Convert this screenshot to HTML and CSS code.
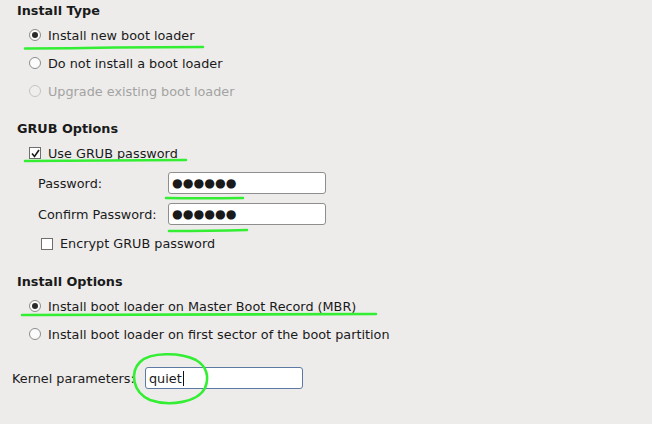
FILE: index.html
```html
<!DOCTYPE html>
<html>
<head>
<meta charset="utf-8">
<title>Boot loader configuration</title>
<link rel="stylesheet" href="styles.css">
</head>
<body>
<div id="Page">

<div class="head">Install Type</div>
<div class="opt"><span class="radio on"></span>Install new boot loader</div>
<div class="opt"><span class="radio"></span>Do not install a boot loader</div>
<div class="opt off"><span class="radio"></span>Upgrade existing boot loader</div>

<div class="head h2">GRUB Options</div>
<div class="opt"><span class="check on"><svg width="9" height="9" viewBox="0 0 9 9"><path d="M1 4.5 L3.5 7.5 L8 1" fill="none" stroke="#1a1a1a" stroke-width="1.6"/></svg></span>Use GRUB password</div>
<div class="field pw1"><span class="lbl">Password:</span><span class="entry dots">&#9679;&#9679;&#9679;&#9679;&#9679;&#9679;</span></div>
<div class="field pw2"><span class="lbl">Confirm Password:</span><span class="entry dots">&#9679;&#9679;&#9679;&#9679;&#9679;&#9679;</span></div>
<div class="opt sub"><span class="check"></span>Encrypt GRUB password</div>

<div class="head h3">Install Options</div>
<div class="opt"><span class="radio on"></span>Install boot loader on Master Boot Record (MBR)</div>
<div class="opt"><span class="radio"></span>Install boot loader on first sector of the boot partition</div>

<div class="field kern"><span class="klbl">Kernel parameters:</span><span class="entry focus"><span class="caret">quiet</span></span></div>

<!-- marker scribbles over the shot -->
<svg id="Marks" width="652" height="424" viewBox="0 0 652 424">
<g fill="none" stroke="#33ee33" stroke-width="2.6" stroke-linecap="round">
<path d="M25 48.5 Q70 48.5 115 47.5 Q160 47 203 47"/>
<path d="M25 161 Q100 160.5 186 160"/>
<path d="M166 198 Q200 198.5 243 198"/>
<path d="M169 231 Q210 231 247 230"/>
<path d="M22 315 Q200 314 376 314"/>
<path d="M196 360 C180 352 150 352 140 362 C130 372 132 392 150 400 C170 407 198 402 205 388 C210 376 206 366 196 360"/>
</g>
</svg>

</div>
</body>
</html>
```
FILE: styles.css
```css
* {margin:0;padding:0;box-sizing:border-box;}
body {background-color:#edeceb;color:#1a1a1a;font-family:"DejaVu Sans",sans-serif;font-size:12.8px;}
#Page {position:relative;width:652px;height:424px;overflow:hidden;padding-top:1px;}
#Marks {position:absolute;top:0;left:0;}

.head {height:20px;line-height:20px;padding-left:17px;font-weight:bold;font-size:12.8px;}
.head.h2 {margin-top:14px;}
.head.h3 {margin-top:15px;}

.opt {height:28px;display:flex;align-items:center;padding-left:29px;}
.opt.off {color:#a3a3a1;}
.opt.sub {padding-left:41px;margin-top:5px;height:27px;}

.radio {width:12px;height:12px;border:1px solid #8c8c8c;border-radius:50%;background:#fbfbfb;margin-right:7px;display:flex;align-items:center;justify-content:center;}
.radio.on::after {content:"";width:6px;height:6px;border-radius:50%;background:#2a2a2a;}
.opt.off .radio {border-color:#c4c4c2;background:#efeeed;}

.check {width:12px;height:12px;border:1px solid #6e6e6e;background:#fff;margin-right:7px;display:flex;align-items:center;justify-content:center;}

.field {display:flex;align-items:center;height:22px;}
.field.pw1 {margin-top:5px;padding-left:38px;}
.field.pw2 {margin-top:9px;padding-left:38px;}
.field.kern {margin-top:19px;padding-left:12px;}
.lbl {width:130px;}
.klbl {width:133px;}

.entry {width:158px;height:22px;border:1px solid #8e8e8e;border-radius:3px;background:#fff;display:flex;align-items:center;padding-left:3px;}
.entry.focus {border-color:#5c7aa3;}
.dots {font-size:12.3px;color:#1a1a1a;}
.caret {border-right:1px solid #111;padding-right:1px;line-height:15px;}
```
